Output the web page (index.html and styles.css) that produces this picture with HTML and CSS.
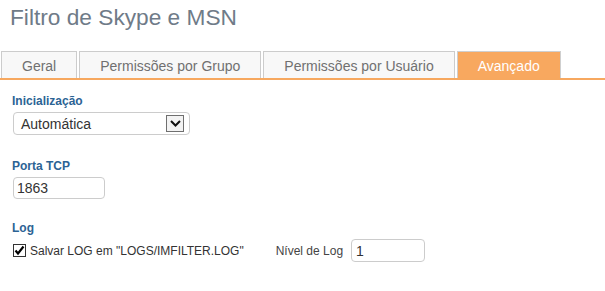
FILE: index.html
```html
<!DOCTYPE html>
<html lang="pt-BR">
<head>
<meta charset="utf-8">
<title>Filtro de Skype e MSN</title>
<link rel="stylesheet" href="styles.css">
</head>
<body>
<h1 class="title">Filtro de Skype e MSN</h1>
<div class="tabs">
  <div class="tab">Geral</div>
  <div class="tab">Permissões por Grupo</div>
  <div class="tab">Permissões por Usuário</div>
  <div class="tab active">Avançado</div>
</div>
<div class="content">
  <div class="field">
    <div class="label">Inicialização</div>
    <div class="select">
      <span class="select-text">Automática</span>
      <span class="select-btn"><svg width="11" height="7" viewBox="0 0 11 7"><path d="M1 1 L5.5 5.5 L10 1" fill="none" stroke="#111" stroke-width="2"/></svg></span>
    </div>
  </div>
  <div class="field field-port">
    <div class="label">Porta TCP</div>
    <div class="input input-port">1863</div>
  </div>
  <div class="field field-log">
    <div class="label">Log</div>
    <div class="log-row">
      <span class="check"><svg width="13" height="13" viewBox="0 0 13 13"><rect x="0.5" y="0.5" width="12" height="12" fill="#fff" stroke="#333"/><path d="M2.5 6.5 L5 9.5 L10.5 2.5" fill="none" stroke="#000" stroke-width="2.2"/></svg></span>
      <span class="check-text">Salvar LOG em "LOGS/IMFILTER.LOG"</span>
      <span class="level-label">Nível de Log</span>
      <div class="input input-level">1</div>
    </div>
  </div>
</div>
</body>
</html>
```
FILE: styles.css
```css
html, body {
  margin: 0;
  padding: 0;
  background: #ffffff;
}
body {
  font-family: "Liberation Sans", Arial, sans-serif;
  color: #333;
}
.title {
  margin: 5px 0 0 0;
  padding-left: 10px;
  font-size: 22.7px;
  font-weight: normal;
  line-height: 25px;
  color: #6f7b88;
}
.tabs {
  display: flex;
  gap: 2px;
  margin-top: 21px;
  padding-left: 1px;
  border-bottom: 2px solid #f7a85f;
}
.tab {
  border: 1px solid #cccccc;
  border-bottom: none;
  background: #f8f8f8;
  padding: 2px 20px 0 20px;
  line-height: 24px;
  font-size: 14px;
  color: #707070;
  white-space: nowrap;
}
.tab.active {
  background: #f8a85f;
  color: #ffffff;
  border-color: #cfcfcf;
}
.content {
  padding-left: 12px;
  padding-top: 14px;
}
.label {
  font-size: 12px;
  font-weight: bold;
  line-height: 14px;
  color: #2c6394;
  margin-bottom: 4px;
}
.field-port {
  margin-top: 24px;
}
.field-log {
  margin-top: 22px;
}
.select {
  display: flex;
  align-items: center;
  justify-content: space-between;
  box-sizing: border-box;
  width: 177px;
  height: 23px;
  margin-left: 1px;
  border: 1px solid #cccccc;
  border-radius: 4px;
  padding-left: 7px;
  padding-right: 5px;
  font-size: 14px;
  color: #333;
}
.select-btn {
  display: flex;
  align-items: center;
  justify-content: center;
  box-sizing: border-box;
  width: 18px;
  height: 17px;
  border: 1px solid #6f6f6f;
  background: #f3f3f3;
}
.input {
  box-sizing: border-box;
  border: 1px solid #cccccc;
  border-radius: 4px;
  font-size: 14px;
  color: #333;
  display: flex;
  align-items: center;
}
.input-port {
  width: 92px;
  height: 22px;
  margin-left: 1px;
  padding-left: 3px;
}
.input-level {
  width: 74px;
  height: 23px;
  padding-left: 4px;
  margin-left: 8px;
}
.log-row {
  display: flex;
  align-items: center;
  height: 23px;
}
.check {
  display: flex;
  margin-left: 1px;
  margin-right: 4px;
}
.check-text {
  font-size: 12px;
  color: #333;
  white-space: nowrap;
}
.level-label {
  margin-left: 32px;
  font-size: 12px;
  color: #444;
  white-space: nowrap;
}
```
